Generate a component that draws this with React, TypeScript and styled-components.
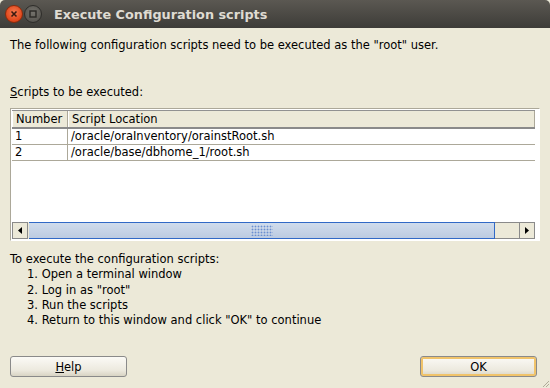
import React from "react";
import styled, { createGlobalStyle } from "styled-components";

const Global = createGlobalStyle`
  html, body { margin: 0; padding: 0; width: 550px; height: 388px; overflow: hidden; background: #ece9d8; }
  * { box-sizing: border-box; }
`;

const Window = styled.div`
  width: 550px;
  height: 388px;
  display: flex;
  flex-direction: column;
  background: #ece9d8;
  font-family: "DejaVu Sans", sans-serif;
  font-size: 11.5px;
  color: #000;
  position: relative;
`;

const TitleBar = styled.div`
  height: 28px;
  flex: none;
  display: flex;
  align-items: center;
  padding-left: 5px;
  background: linear-gradient(#5b5852, #3d3c38);
  border-radius: 5px 5px 0 0;
`;

const CircleBtn = styled.div<{ $close?: boolean }>`
  width: 18px;
  height: 18px;
  border-radius: 50%;
  margin-right: 1px;
  display: flex;
  align-items: center;
  justify-content: center;
  background: ${(p) =>
    p.$close
      ? "radial-gradient(circle at 50% 40%, #f47a50, #e0461a 70%, #b8360f)"
      : "radial-gradient(circle at 50% 40%, #74726c, #5a5853 70%, #3f3e3a)"};
  border: 1px solid ${(p) => (p.$close ? "#8a2a0c" : "#2e2d2a")};
`;

const TitleText = styled.div`
  margin-left: 11px;
  font-family: "DejaVu Sans", sans-serif;
  font-weight: bold;
  font-size: 12.8px;
  color: #dfdbd2;
`;

const Body = styled.div`
  flex: 1;
  display: flex;
  flex-direction: column;
  padding: 0 10px;
`;

const Intro = styled.div`
  margin-top: 10px;
  line-height: 15px;
`;

const Label = styled.div`
  margin-top: 32px;
  line-height: 15px;
`;

const U = styled.span`
  text-decoration: underline;
`;

const TablePane = styled.div`
  margin-top: 8px;
  height: 133px;
  border: 1px solid #aca899;
  border-right-color: #fff;
  border-bottom-color: #fff;
  background: #fff;
  display: flex;
  flex-direction: column;
  padding: 1px 4px 1px 1px;
`;

const Grid = styled.div`
  flex: 1;
  display: flex;
  flex-direction: column;
`;

const HeaderRow = styled.div`
  display: grid;
  grid-template-columns: 56px 1fr;
  height: 19px;
  background: #ece9d8;
  border-top: 1px solid #919191;
  border-bottom: 2px solid #8a8a8a;
`;

const HeaderCell = styled.div`
  padding-left: 3px;
  line-height: 16px;
  border-right: 1px solid #aca899;
  border-left: 1px solid #fff;
`;

const Row = styled.div`
  display: grid;
  grid-template-columns: 56px 1fr;
  height: 16px;
  border-bottom: 1px solid #aca899;
`;

const Cell = styled.div<{ $first?: boolean }>`
  padding-left: 3px;
  line-height: 15px;
  border-right: ${(p) => (p.$first ? "1px solid #aca899" : "none")};
  white-space: nowrap;
  overflow: hidden;
`;

const Spacer = styled.div`
  flex: 1;
`;

const ScrollBar = styled.div`
  height: 17px;
  display: flex;
  background: #ece9d8;
`;

const ArrowBtn = styled.div`
  width: 16px;
  height: 17px;
  background: #ece9d8;
  border: 1px solid #8a8a8a;
  display: flex;
  align-items: center;
  justify-content: center;
`;

const Thumb = styled.div`
  flex: 1;
  margin-left: 1px;
  background: linear-gradient(#d0dcec, #bccbe1);
  border-top: 1px solid #3169c6;
  border-bottom: 1px solid #3169c6;
  border-right: 1px solid #3169c6;
  display: flex;
  align-items: center;
  justify-content: center;
`;

const Track = styled.div`
  width: 24px;
  background: #ece9d8;
  border-top: 1px solid #8a8a8a;
  border-bottom: 1px solid #8a8a8a;
`;

const Grip = styled.div`
  width: 22px;
  height: 11px;
  background-image: radial-gradient(circle, #6b8fd0 0.8px, transparent 1.1px);
  background-size: 3px 3px;
`;

const Steps = styled.div`
  margin-top: 11px;
  line-height: 15.3px;
`;

const Step = styled.div`
  padding-left: 17px;
`;

const Footer = styled.div`
  margin-top: auto;
  margin-bottom: 11px;
  padding-right: 3px;
  display: flex;
  justify-content: space-between;
`;

const Button = styled.button<{ $default?: boolean }>`
  width: 117px;
  height: 21px;
  font-family: "DejaVu Sans", sans-serif;
  font-size: 11.5px;
  color: #000;
  border-radius: 3px;
  border: 1px solid #8a8a8a;
  background: linear-gradient(#fbfaf6, #ece9de 70%, #d8d4c4);
  box-shadow: ${(p) => (p.$default ? "inset 0 0 0 2px #f0c36a" : "none")};
  padding: 0;
`;

const ResizeGrip = styled.svg`
  position: absolute;
  right: 0;
  bottom: 0;
`;

export default function App() {
  return (
    <>
      <Global />
      <Window>
        <TitleBar>
          <CircleBtn $close>
            <svg width="8" height="8" viewBox="0 0 8 8">
              <path d="M1.5 1.5L6.5 6.5M6.5 1.5L1.5 6.5" stroke="#3a1a10" strokeWidth="1.6" />
            </svg>
          </CircleBtn>
          <CircleBtn>
            <svg width="8" height="8" viewBox="0 0 8 8">
              <rect x="1" y="1" width="6" height="6" fill="none" stroke="#2a2926" strokeWidth="1.4" />
            </svg>
          </CircleBtn>
          <TitleText>Execute Configuration scripts</TitleText>
        </TitleBar>
        <Body>
          <Intro>The following configuration scripts need to be executed as the "root" user.</Intro>
          <Label>
            <U>S</U>cripts to be executed:
          </Label>
          <TablePane>
            <Grid>
              <HeaderRow>
                <HeaderCell>Number</HeaderCell>
                <HeaderCell>Script Location</HeaderCell>
              </HeaderRow>
              <Row>
                <Cell $first>1</Cell>
                <Cell>/oracle/oraInventory/orainstRoot.sh</Cell>
              </Row>
              <Row>
                <Cell $first>2</Cell>
                <Cell>/oracle/base/dbhome_1/root.sh</Cell>
              </Row>
              <Spacer />
            </Grid>
            <ScrollBar>
              <ArrowBtn>
                <svg width="4" height="7" viewBox="0 0 4 7">
                  <path d="M4 0L0 3.5L4 7Z" fill="#000" />
                </svg>
              </ArrowBtn>
              <Thumb>
                <Grip />
              </Thumb>
              <Track />
              <ArrowBtn>
                <svg width="4" height="7" viewBox="0 0 4 7">
                  <path d="M0 0L4 3.5L0 7Z" fill="#000" />
                </svg>
              </ArrowBtn>
            </ScrollBar>
          </TablePane>
          <Steps>
            <div>To execute the configuration scripts:</div>
            <Step>1. Open a terminal window</Step>
            <Step>2. Log in as "root"</Step>
            <Step>3. Run the scripts</Step>
            <Step>4. Return to this window and click "OK" to continue</Step>
          </Steps>
          <Footer>
            <Button>
              <U>H</U>elp
            </Button>
            <Button $default>OK</Button>
          </Footer>
        </Body>
        <ResizeGrip width="10" height="10" viewBox="0 0 10 10">
          <path d="M9 3L3 9M9 6L6 9" stroke="#b0ab98" strokeWidth="1" />
        </ResizeGrip>
      </Window>
    </>
  );
}
